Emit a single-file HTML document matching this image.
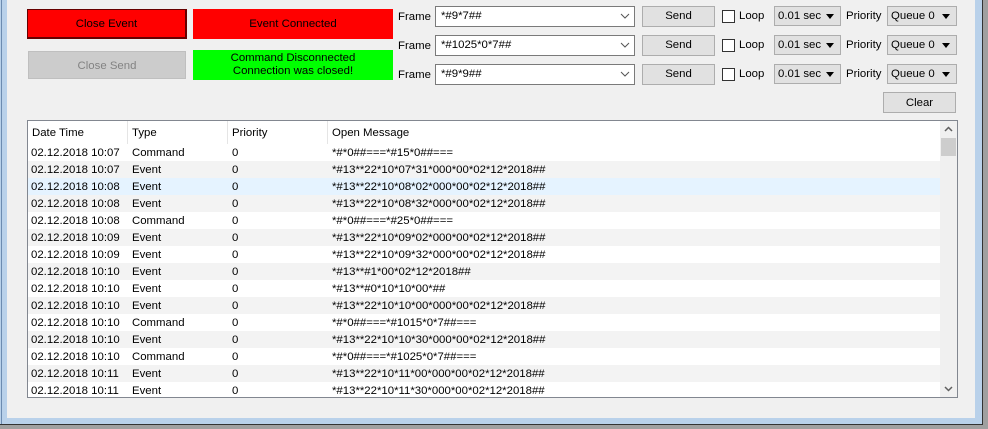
<!DOCTYPE html><html><head><style>
body{margin:0;width:988px;height:429px;background:#a0a0a0;font-family:"Liberation Sans",sans-serif;font-size:11.4px;position:relative;overflow:hidden;color:#000}
.a{position:absolute;box-sizing:border-box}
.btn{border:1px solid #adadad;background:#e1e1e1;text-align:center}
.cb{background:#fff;border:1px solid #7a7a7a}
.sel{background:#e1e1e1;border:1px solid #adadad}
.tri{position:absolute;right:6px;top:7px;width:0;height:0;border-left:4px solid transparent;border-right:4px solid transparent;border-top:5px solid #000}
.row{position:absolute;left:0;width:912px;height:17px;line-height:17px}
.row span{position:absolute;top:1px}
</style></head><body>
<div class="a" style="left:0;top:0;width:983px;height:425px;background:#b9d1ea;border-right:1px solid #333;border-bottom:1px solid #333"></div>
<div class="a" style="left:1px;top:0;width:1px;height:424px;background:#6c8bb0"></div>
<div class="a" style="left:7px;top:0;width:968px;height:418px;background:#f0f0f0"></div>

<div class="a" style="left:27px;top:9px;width:160px;height:30px;background:#f00;border:1px solid #600;border-width:1px 2px 2px 1px;line-height:29px;text-align:center">Close Event</div>
<div class="a" style="left:193px;top:9px;width:200px;height:30px;background:#f00;line-height:31px;text-align:center">Event Connected</div>
<div class="a" style="left:28px;top:51px;width:158px;height:28px;background:#ccc;border:1px solid #bfbfbf;color:#838383;line-height:28px;text-align:center">Close Send</div>
<div class="a" style="left:193px;top:50px;width:200px;height:30px;background:#0f0;line-height:13px;text-align:center;padding-top:2px">Command Disconnected<br>Connection was closed!</div>

<div id="r"></div>
<script>
var ys=[6,35,64],vs=["*#9*7##","*#1025*0*7##","*#9*9##"],h="";
for(var i=0;i<3;i++){var y=ys[i];
h+='<div class="a" style="left:398px;top:'+(y+5)+'px">Frame</div>';
h+='<div class="a cb" style="left:435px;top:'+y+'px;width:200px;height:21px;padding:3px 0 0 5px">'+vs[i]+'<svg style="position:absolute;right:4px;top:6px" width="10" height="6"><path d="M1 1L5 5L9 1" stroke="#555" fill="none"/></svg></div>';
h+='<div class="a btn" style="left:642px;top:'+y+'px;width:73px;height:21px;line-height:19px">Send</div>';
h+='<div class="a cb" style="left:722px;top:'+(y+4)+'px;width:13px;height:13px;border-color:#333"></div>';
h+='<div class="a" style="left:739px;top:'+(y+4)+'px">Loop</div>';
h+='<div class="a sel" style="left:774px;top:'+y+'px;width:67px;height:20px;padding:3px 0 0 3px">0.01 sec<div class="tri"></div></div>';
h+='<div class="a" style="left:846px;top:'+(y+4)+'px">Priority</div>';
h+='<div class="a sel" style="left:887px;top:'+y+'px;width:70px;height:20px;padding:3px 0 0 3px">Queue 0<div class="tri"></div></div>';}
h+='<div class="a btn" style="left:883px;top:92px;width:73px;height:21px;line-height:21px">Clear</div>';
h+='<div class="a" style="left:27px;top:120px;width:931px;height:278px;background:#fff;border:1px solid #828790;overflow:hidden"><div id="l" style="position:relative"></div></div>';
document.getElementById('r').innerHTML=h;
var d=[["10:07","Command","*#*0##===*#15*0##==="],["10:07","Event","*#13**22*10*07*31*000*00*02*12*2018##"],["10:08","Event","*#13**22*10*08*02*000*00*02*12*2018##"],["10:08","Event","*#13**22*10*08*32*000*00*02*12*2018##"],["10:08","Command","*#*0##===*#25*0##==="],["10:09","Event","*#13**22*10*09*02*000*00*02*12*2018##"],["10:09","Event","*#13**22*10*09*32*000*00*02*12*2018##"],["10:10","Event","*#13**#1*00*02*12*2018##"],["10:10","Event","*#13**#0*10*10*00*##"],["10:10","Event","*#13**22*10*10*00*000*00*02*12*2018##"],["10:10","Command","*#*0##===*#1015*0*7##==="],["10:10","Event","*#13**22*10*10*30*000*00*02*12*2018##"],["10:10","Command","*#*0##===*#1025*0*7##==="],["10:11","Event","*#13**22*10*11*00*000*00*02*12*2018##"],["10:11","Event","*#13**22*10*11*30*000*00*02*12*2018##"]];
var g='<div class="row" style="top:0;height:23px;line-height:23px"><span style="left:4px">Date Time</span><span style="left:104px">Type</span><span style="left:204px">Priority</span><span style="left:304px">Open Message</span></div>';
[99,199,299].forEach(function(x){g+='<div class="a" style="left:'+x+'px;top:0;width:1px;height:23px;background:#e5e5e5"></div>'});
for(var k=0;k<d.length;k++){var bg=k==2?'#e5f3ff':(k%2?'#f3f3f3':'#fff');
g+='<div class="row" style="top:'+(23+k*17)+'px;background:'+bg+'"><span style="left:3px">02.12.2018 '+d[k][0]+'</span><span style="left:104px">'+d[k][1]+'</span><span style="left:204px">0</span><span style="left:304px">'+d[k][2]+'</span></div>';}
g+='<div class="a" style="left:912px;top:0;width:17px;height:276px;background:#f0f0f0"><svg style="position:absolute;left:4px;top:5px" width="9" height="6"><path d="M1 5L4.5 1.5L8 5" stroke="#606060" stroke-width="1.5" fill="none"/></svg><div class="a" style="left:1px;top:17px;width:15px;height:18px;background:#cdcdcd"></div><svg style="position:absolute;left:4px;top:265px" width="9" height="6"><path d="M1 1L4.5 4.5L8 1" stroke="#606060" stroke-width="1.5" fill="none"/></svg></div>';
document.getElementById('l').innerHTML=g;
</script>
</body></html>
